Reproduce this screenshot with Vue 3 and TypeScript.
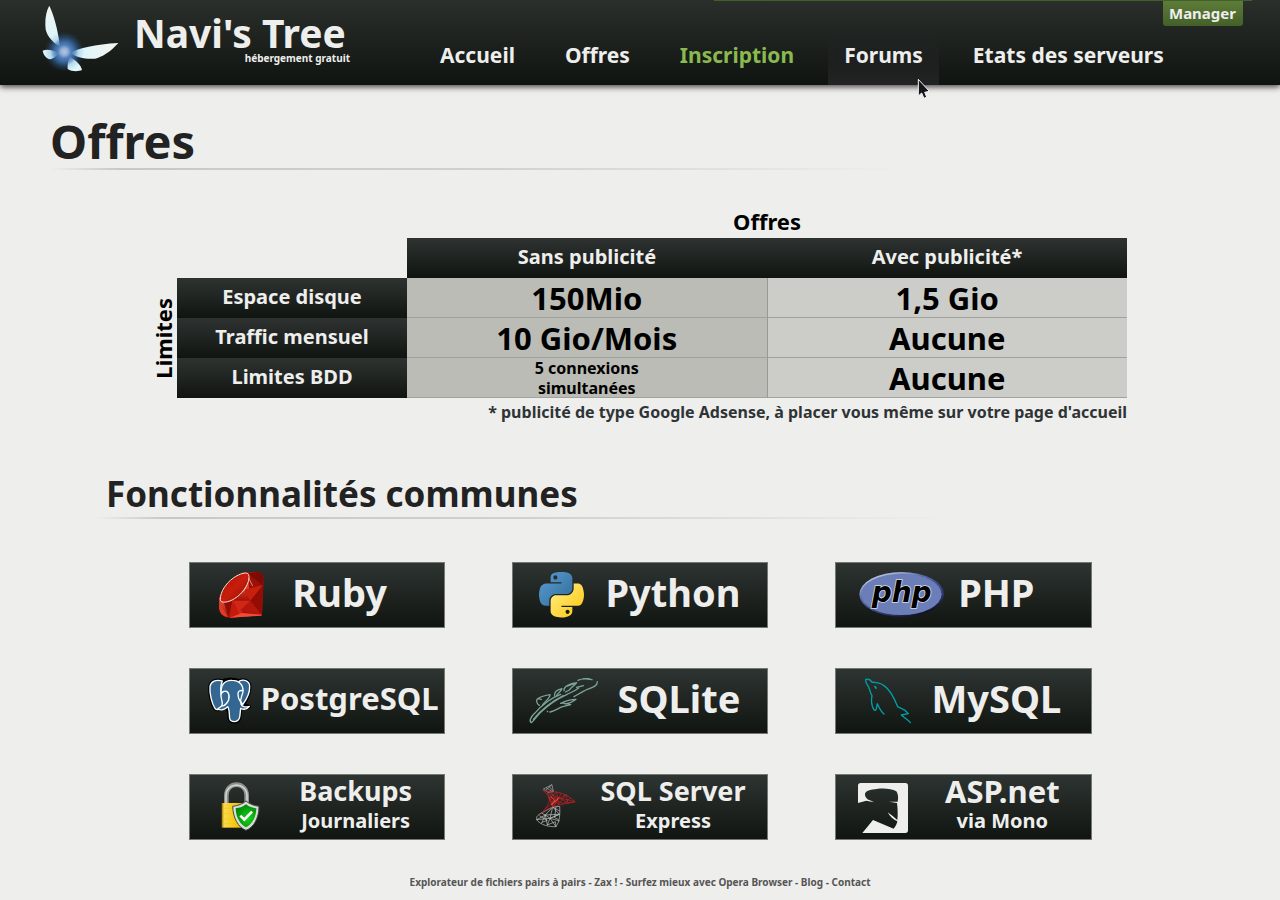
<script setup lang="ts">
interface NavItem {
  label: string
  href: string
  state?: 'accent' | 'hover'
}

interface Feature {
  id: string
  name: string
  detail?: string
  size: 'large' | 'medium' | 'small'
  column: 'tight' | 'normal' | 'roomy'
  viewBox: string
}

const nav: NavItem[] = [
  { label: 'Accueil', href: '#accueil' },
  { label: 'Offres', href: '#offres' },
  { label: 'Inscription', href: '#inscription', state: 'accent' },
  { label: 'Forums', href: '#forums', state: 'hover' },
  { label: 'Etats des serveurs', href: '#etats' },
]

const features: Feature[] = [
  { id: 'ruby', name: 'Ruby', size: 'large', column: 'tight', viewBox: '30 39 330 192' },
  { id: 'python', name: 'Python', size: 'large', column: 'normal', viewBox: '39 39 330 192' },
  { id: 'php', name: 'PHP', size: 'large', column: 'normal', viewBox: '18 39 330 192' },
  { id: 'postgresql', name: 'PostgreSQL', size: 'medium', column: 'normal', viewBox: '30 357 330 192' },
  { id: 'sqlite', name: 'SQLite', size: 'large', column: 'roomy', viewBox: '39 357 330 192' },
  { id: 'mysql', name: 'MySQL', size: 'large', column: 'normal', viewBox: '18 357 330 192' },
  { id: 'backups', name: 'Backups', detail: 'Journaliers', size: 'small', column: 'roomy', viewBox: '30 45 330 192' },
  { id: 'sqlserver', name: 'SQL Server', detail: 'Express', size: 'small', column: 'normal', viewBox: '39 45 330 192' },
  { id: 'aspnet', name: 'ASP.net', detail: 'via Mono', size: 'medium', column: 'roomy', viewBox: '18 45 330 192' },
]

const footerLinks: string[] = [
  'Explorateur de fichiers pairs à pairs',
  'Zax !',
  'Surfez mieux avec Opera Browser',
  'Blog',
  'Contact',
]
</script>

<template>
  <div class="page">
    <header class="top">
      <a class="brand" href="#accueil">
        <svg class="fairy" viewBox="120 12 240 207" aria-hidden="true">
          <defs>
            <radialGradient id="glow">
              <stop offset="0" stop-color="#b4c3dc" />
              <stop offset="0.25" stop-color="#95b0d8" />
              <stop offset="0.5" stop-color="#4678b4" stop-opacity="0.85" />
              <stop offset="1" stop-color="#1f4a80" stop-opacity="0" />
            </radialGradient>
            <radialGradient id="wing" gradientUnits="userSpaceOnUse" cx="193" cy="155" r="160">
              <stop offset="0.15" stop-color="#8fc0e4" />
              <stop offset="0.38" stop-color="#dff5fa" />
              <stop offset="1" stop-color="#f4f4f0" />
            </radialGradient>
          </defs>
          <circle cx="193" cy="155" r="60" fill="url(#glow)" />
          <g fill="url(#wing)">
            <path d="M148 17C160 42 173 84 180 140C162 131 141 110 137 88C134 60 138 34 148 17Z" />
            <path d="M355 129C332 155 305 172 285 176C255 178 228 172 212 158C235 145 285 133 355 129Z" />
            <path d="M128 152C140 146 160 150 177 160C166 171 157 178 150 178C139 175 130 165 128 152Z" />
            <path d="M209 170C227 180 243 195 246 210C235 215 215 215 203 207C202 195 204 181 209 170Z" />
          </g>
          <circle cx="193" cy="155" r="42" fill="url(#glow)" />
        </svg>
        <span class="brand-text">
          <span class="brand-name">Navi's Tree</span>
          <span class="brand-tag">hébergement gratuit</span>
        </span>
      </a>
      <nav class="menu">
        <a v-for="item in nav" :key="item.label" :href="item.href" :class="['menu-link', item.state]">
          {{ item.label }}
          <svg v-if="item.state === 'hover'" class="pointer" viewBox="347 234 42 66" aria-hidden="true">
            <path d="M351 238L351 288L361 279L368 295L376 291L370 277L384 274Z" fill="#16161a" stroke="#f4f4f4" stroke-width="3" stroke-linejoin="round" />
          </svg>
        </a>
      </nav>
      <div class="manager">
        <a class="manager-link" href="#manager">Manager</a>
      </div>
    </header>

    <main>
      <h1 class="title">Offres</h1>

      <section class="offers">
        <table class="grid">
          <colgroup>
            <col class="col-side" />
            <col class="col-head" />
            <col class="col-value" />
            <col class="col-value" />
          </colgroup>
          <thead>
            <tr class="group-row">
              <td colspan="2"></td>
              <th colspan="2" scope="colgroup" class="group">Offres</th>
            </tr>
            <tr>
              <td colspan="2"></td>
              <th scope="col" class="dark">Sans publicité</th>
              <th scope="col" class="dark">Avec publicité*</th>
            </tr>
          </thead>
          <tbody>
            <tr>
              <th rowspan="3" scope="rowgroup" class="side"><span>Limites</span></th>
              <th scope="row" class="dark">Espace disque</th>
              <td class="value free">150Mio</td>
              <td class="value ads">1,5 Gio</td>
            </tr>
            <tr>
              <th scope="row" class="dark">Traffic mensuel</th>
              <td class="value free">10 Gio/Mois</td>
              <td class="value ads">Aucune</td>
            </tr>
            <tr>
              <th scope="row" class="dark">Limites BDD</th>
              <td class="value free compact">5 connexions<br />simultanées</td>
              <td class="value ads">Aucune</td>
            </tr>
          </tbody>
        </table>
        <p class="note">* publicité de type Google Adsense, à placer vous même sur votre page d'accueil</p>
      </section>

      <h2 class="subtitle">Fonctionnalités communes</h2>

      <ul class="cards">
        <li v-for="f in features" :key="f.id" :class="['card', f.column]">
          <svg class="icon" :viewBox="f.viewBox" aria-hidden="true">
            <g v-if="f.id === 'ruby'">
              <defs>
                <linearGradient id="rb1" x1="0" y1="0" x2="1" y2="1">
                  <stop offset="0" stop-color="#a80d00" />
                  <stop offset="0.5" stop-color="#c81e0c" />
                  <stop offset="1" stop-color="#8e0b04" />
                </linearGradient>
                <linearGradient id="rb2" x1="0" y1="0" x2="0" y2="1">
                  <stop offset="0" stop-color="#f0583c" />
                  <stop offset="1" stop-color="#a30f06" />
                </linearGradient>
              </defs>
              <path d="M188 67L235 66Q250 67 251 84L246 196L150 203Q119 203 117 172L118 138Z" fill="#b01208" />
              <path d="M207 70L235 66Q250 67 251 84L249 110L205 92Z" fill="#7c0a05" />
              <path d="M210 75L249 107L192 118Z" fill="#9d1006" />
              <path d="M205 92L192 120L159 151L211 152Z" fill="url(#rb2)" />
              <path d="M192 120L249 105L211 152Z" fill="#c9200e" />
              <path d="M249 106L246 196L211 152Z" fill="#930c05" />
              <path d="M158 152L211 152L184 190L246 196L150 203Z" fill="#d42616" />
              <path d="M211 152L246 196L180 181Z" fill="#b3160b" />
              <path d="M118 142L132 160L159 151L148 202Q119 200 117 172Z" fill="url(#rb2)" />
              <path d="M132 159L158 152L146 202Z" fill="#8f0d06" />
              <path d="M118 160L145 202Q119 200 117 172Z" fill="#e23a26" />
              <path d="M148 203L185 189L246 194L244 197Z" fill="#f04c38" />
              <path d="M159 151L178 192L148 203Z" fill="#c41a0c" />
              <path d="M121 148C121 125 137 101 160 84C180 70 202 64 206 74C211 90 199 115 179 134C160 152 136 160 125 155Q121 153 121 148Z" fill="url(#rb1)" stroke="#f7ddd6" stroke-width="3" />
              <path d="M206 84L218 108M196 114L191 124" stroke="#f6c8bc" stroke-width="2" />
            </g>

            <g v-else-if="f.id === 'python'" transform="translate(117 66) scale(1.215)">
              <defs>
                <linearGradient id="pyb" x1="0" y1="0" x2="1" y2="1">
                  <stop offset="0" stop-color="#5a9fd4" />
                  <stop offset="1" stop-color="#306998" />
                </linearGradient>
                <linearGradient id="pyy" x1="0.2" y1="0.2" x2="0.9" y2="0.9">
                  <stop offset="0" stop-color="#ffe873" />
                  <stop offset="1" stop-color="#ffc816" />
                </linearGradient>
              </defs>
              <path fill="url(#pyb)" fill-rule="evenodd" d="M54.9 0C50.3 0 46 .4 42.1 1.1C30.8 3.1 28.7 7.3 28.7 15V25.3H55.5V28.7H18.6C10.8 28.7 4 33.3 1.9 42.3C-.6 52.5 -.7 58.8 1.9 69.5C3.8 77.4 8.3 83.1 16.1 83.1H25.4V70.8C25.4 62 33 54.2 42.1 54.2H68.9C76.3 54.2 82.3 48.1 82.3 40.6V15C82.3 7.8 76.2 2.3 68.9 1.1C64.3 .3 59.5 0 54.9 0ZM40.4 8.2C43.2 8.2 45.5 10.5 45.5 13.3C45.5 16.2 43.2 18.4 40.4 18.4C37.6 18.4 35.4 16.2 35.4 13.3C35.4 10.5 37.6 8.2 40.4 8.2Z" />
              <path fill="url(#pyy)" fill-rule="evenodd" d="M85.6 28.7V40.6C85.6 49.8 77.8 57.6 68.9 57.6H42.1C34.8 57.6 28.7 63.8 28.7 71.2V96.7C28.7 104 35 108.3 42.1 110.3C50.6 112.8 58.7 113.3 68.9 110.3C75.6 108.4 82.3 104.5 82.3 96.7V86.5H55.5V83.1H95.7C103.5 83.1 106.4 77.7 109.1 69.5C111.9 61.1 111.8 53 109.1 42.3C107.2 34.5 103.5 28.7 95.7 28.7ZM70.6 93.3C73.4 93.3 75.6 95.6 75.6 98.4C75.6 101.2 73.4 103.5 70.6 103.5C67.8 103.5 65.5 101.2 65.5 98.4C65.5 95.6 67.8 93.3 70.6 93.3Z" />
            </g>

            <g v-else-if="f.id === 'php'">
              <defs>
                <linearGradient id="phe" x1="0.1" y1="0" x2="0.8" y2="1">
                  <stop offset="0" stop-color="#e6e8f4" />
                  <stop offset="0.35" stop-color="#5c6db0" />
                  <stop offset="0.75" stop-color="#2c3670" />
                  <stop offset="1" stop-color="#05060c" />
                </linearGradient>
              </defs>
              <ellipse cx="215" cy="133" rx="127" ry="67" fill="url(#phe)" />
              <ellipse cx="214" cy="133" rx="121" ry="62" fill="#6c7eb7" />
              <text class="php-text" x="215" y="155" text-anchor="middle">php</text>
            </g>

            <g v-else-if="f.id === 'postgresql'" stroke-linecap="round" stroke-linejoin="round">
              <g fill="#336791" stroke="#000" stroke-width="11">
                <path d="M127 393C108 387 92 395 90 410C88 430 96 462 105 475C110 482 118 479 123 472L134 468L140 475C148 480 147 490 148 505C150 519 174 520 178 505C181 490 180 480 184 474L208 470L190 464C200 448 210 425 209 408C207 390 190 388 178 393C162 387 142 387 127 393Z" />
              </g>
              <g fill="#336791" stroke="#fff" stroke-width="4">
                <path d="M127 393C108 387 92 395 90 410C88 430 96 462 105 475C110 482 118 479 123 472L131 464C124 448 118 410 127 393Z" />
                <path d="M178 393C190 388 207 390 209 408C210 425 200 448 188 464L178 450Z" />
                <path d="M126 466C132 470 142 460 146 450C150 440 146 426 140 424C132 422 124 426 123 434C122 448 130 456 126 466Z" />
                <path d="M124 432C120 405 135 390 156 391C178 391 190 405 189 424C188 440 178 440 183 463C186 472 199 472 208 469C202 477 192 480 182 475C180 488 181 496 178 505C173 518 152 518 149 505C147 490 149 478 143 470C136 478 124 482 113 477L126 467C132 470 142 460 146 450C150 440 146 426 140 424C132 422 125 426 124 432Z" />
                <path fill="none" d="M189 422C180 420 174 424 174 431C174 442 180 455 188 462" />
              </g>
            </g>

            <g v-else-if="f.id === 'sqlite'" fill="none" stroke="#7ba496" stroke-width="4" stroke-linecap="round" stroke-linejoin="round">
              <path d="M94 518C86 514 93 500 104 490C125 466 150 445 182 433M94 518C104 510 110 499 122 487C140 470 160 452 200 434C210 428 222 425 236 414M100 508C125 478 152 456 190 437" />
              <path d="M118 466C108 460 108 448 114 446L124 448M112 447C120 440 138 436 150 434C152 440 142 448 128 464M164 438C162 428 168 420 186 416C182 424 176 428 170 436M192 422C190 412 208 400 230 398C224 406 214 412 208 420L196 426M202 408L230 398" />
              <path d="M234 391C246 384 260 386 276 389M250 386L268 386M292 395C292 408 278 412 262 418C248 424 236 432 222 440M230 412L250 407M150 486C166 482 176 474 188 470L212 464C198 460 190 458 182 460C198 452 216 448 228 448C218 456 214 460 196 462M142 484L143 485" />
            </g>

            <g v-else-if="f.id === 'mysql'" fill="none" stroke="#00a0a8" stroke-width="4" stroke-linecap="round" stroke-linejoin="round">
              <path d="M107 388C115 386 121 388 125 396C135 398 150 396 162 407C182 420 195 450 203 470C212 476 224 476 235 491L214 495C222 503 234 508 241 518M107 388C105 398 112 404 116 411C120 420 120 428 126 437C123 452 126 468 130 476C134 484 138 482 139 475L142 461C147 472 154 486 162 492" />
              <path d="M134 409C138 410 139 413 138 415Z" />
            </g>

            <g v-else-if="f.id === 'backups'">
              <defs>
                <linearGradient id="lkb">
                  <stop offset="0" stop-color="#8f6a00" />
                  <stop offset="0.08" stop-color="#fbd94c" />
                  <stop offset="0.5" stop-color="#f2c80c" />
                  <stop offset="1" stop-color="#b88600" />
                </linearGradient>
                <radialGradient id="lks" cx="0.6" cy="0.6" r="0.6">
                  <stop offset="0" stop-color="#18d41a" />
                  <stop offset="1" stop-color="#008a06" />
                </radialGradient>
              </defs>
              <path d="M139 130V104C139 60 200 60 200 104V130" fill="none" stroke="#8e908e" stroke-width="14" />
              <path d="M138 130V104C138 62 201 62 201 104V130" fill="none" stroke="#d0d2d0" stroke-width="5" />
              <path d="M125 126H212V200H125Z" fill="url(#lkb)" />
              <path d="M126 142H200M126 158H200M126 174H200M126 188H200" stroke="#e6bc08" stroke-width="1" />
              <path d="M198 120C208 129 222 134 237 136C237 170 222 199 198 208C174 199 159 170 158 136C174 134 188 129 198 120Z" fill="#d9dcd9" stroke="#444844" stroke-width="3" />
              <path d="M198 130C208 138 218 141 229 142C228 170 216 190 198 199C180 190 168 170 167 142C178 141 188 138 198 130Z" fill="url(#lks)" />
              <path d="M181 164L193 176L216 152" fill="none" stroke="#fff" stroke-width="8" />
            </g>

            <g v-else-if="f.id === 'sqlserver'" fill="none" stroke-linejoin="round">
              <g stroke="#a5aaac" stroke-width="2">
                <path d="M130 84L156 71L160 92L144 94ZM138 80L157 92M156 71L134 90M148 76L160 92" />
                <path d="M124 156C112 163 108 168 110 176C120 192 148 198 168 197C180 180 180 160 179 136L158 138L124 156ZM110 176L136 162L158 138L150 172L168 197M124 156L136 162L142 192L150 172L110 176M124 188L136 162L178 160L150 172L179 180M158 138L179 150M136 162L150 172L178 160L158 138M142 192L166 182L168 197M118 164L142 178L126 184M168 137L164 170L176 176" stroke="#c3c8c9" />
              </g>
              <path d="M128 87C145 92 155 92 170 93C192 97 212 108 225 122C205 127 180 130 160 137C145 143 132 150 124 157C140 138 150 126 147 112C143 100 136 94 128 87ZM147 112L170 93L176 130L198 101L204 126L225 122L176 110L147 112L176 130M142 96L160 137L184 97M147 112L160 137L176 110L204 126M150 128L176 110L142 96M136 144L168 118L190 128L212 111M154 94L168 118L198 101" stroke="#d31c22" stroke-width="2" />
              <path d="M150 104L164 118L154 132L176 112" stroke="#f0543c" stroke-width="3" />
            </g>

            <g v-else>
              <path d="M92 66H226Q234 66 234 74V208Q234 216 226 216H97L129 177L191 203C197 196 201 188 202 181C190 177 180 166 173 154L188 165L202 177C204 162 203 140 201 126L177 122L203 122C206 110 204 98 199 91C185 83 160 81 140 84C126 85 108 88 105 98C104 108 112 115 120 118L132 124L109 119L84 126V74Q84 66 92 66Z" fill="#eeeeec" />
            </g>
          </svg>
          <div class="label">
            <span :class="['name', f.size]">{{ f.name }}</span>
            <span v-if="f.detail" class="detail">{{ f.detail }}</span>
          </div>
        </li>
      </ul>
    </main>

    <footer class="foot">
      <template v-for="(text, i) in footerLinks" :key="text">
        <template v-if="i > 0"> - </template>
        <a href="#footer">{{ text }}</a>
      </template>
    </footer>
  </div>
</template>

<style>
body {
  background: #eeeeec;
}
</style>

<style scoped>
.page {
  font-family: "Noto Sans", "Open Sans", sans-serif;
  font-weight: 700;
  color: #222;
}

.page a {
  color: inherit;
  text-decoration: none;
}

.top {
  position: relative;
  display: flex;
  height: 85px;
  background: linear-gradient(#2a2f2c, #0f1410);
  box-shadow: 0 2px 6px #4a4244;
  color: #eeeeec;
}

.brand {
  display: flex;
  flex-shrink: 0;
  width: 350px;
  padding-left: 40px;
  box-sizing: border-box;
}

.fairy {
  flex-shrink: 0;
  width: 80px;
  height: 69px;
  margin-top: 4px;
}

.brand-text {
  display: flex;
  flex-direction: column;
  flex: 1;
  padding: 13px 0 0 14px;
}

.brand-name {
  font-size: 39px;
  line-height: 40px;
  white-space: nowrap;
}

.brand-tag {
  font-size: 10px;
  line-height: 10px;
  text-align: right;
}

.menu {
  display: flex;
  align-items: stretch;
  gap: 18px;
  padding: 24px 0 0 74px;
}

.menu-link {
  position: relative;
  padding: 15px 16px 0;
  font-size: 21px;
  line-height: 32px;
  white-space: nowrap;
}

.page .accent {
  color: #8ab950;
}

.hover {
  background: linear-gradient(rgba(36, 36, 38, 0), #222324);
}

.pointer {
  position: absolute;
  left: 89px;
  top: 54px;
  width: 14px;
  height: 22px;
  z-index: 1;
}

.manager {
  position: absolute;
  top: 0;
  right: 28px;
  width: 42%;
  border-top: 1px solid #44602a;
  display: flex;
  justify-content: flex-end;
  padding-right: 9px;
  box-sizing: border-box;
}

.manager-link {
  padding: 0 7px 0 6px;
  height: 25px;
  font-size: 15px;
  line-height: 24px;
  background: linear-gradient(#5d7c38, #44602a);
  border-radius: 0 0 3px 3px;
}

.title,
.subtitle {
  margin: 0;
  padding-bottom: 1px;
  background: linear-gradient(90deg, transparent, #c8c8c6 8%, #d0d0ce 50%, transparent) left bottom / 855px 2px no-repeat;
}

.title {
  margin: 28px 0 0 50px;
  font-size: 47px;
  line-height: 56px;
}

.subtitle {
  margin: 46px 0 0 95px;
  padding-left: 11px;
  font-size: 35px;
  line-height: 49px;
}

.offers {
  max-width: 974px;
  margin: 36px auto 0;
}

.grid {
  width: 100%;
  border-collapse: collapse;
  table-layout: fixed;
}

.grid th,
.grid td {
  padding: 0;
  text-align: center;
}

.col-side {
  width: 24px;
}

.col-head {
  width: 230px;
}

.group-row {
  height: 32px;
}

.grid .group {
  padding-bottom: 2px;
  font-size: 22px;
  line-height: 30px;
  color: #000;
}

.grid .dark {
  height: 40px;
  padding-bottom: 3px;
  box-sizing: border-box;
  background: linear-gradient(#2e3331, #101411);
  color: #eeeeec;
  font-size: 20px;
  line-height: 24px;
}

.side span {
  display: block;
  writing-mode: vertical-rl;
  transform: rotate(180deg);
  color: #000;
  font-size: 22px;
  line-height: 20px;
  width: 20px;
}

.value {
  color: #000;
  font-size: 31px;
  line-height: 38px;
  box-shadow: inset 0 -1px #a0a29d;
}

.free {
  background: #babcb5;
  border-right: 1px solid #989a95;
}

.ads {
  background: #cccdc9;
}

.grid .compact {
  font-size: 16px;
  line-height: 20px;
}

.note {
  margin: 3px 0 0;
  color: #2e3436;
  font-size: 16px;
  line-height: 22px;
  text-align: right;
}

.cards {
  list-style: none;
  max-width: 903px;
  margin: 43px auto 0;
  padding: 0;
  display: grid;
  grid-template-columns: repeat(3, 1fr);
  gap: 40px 67px;
}

.card {
  display: grid;
  grid-template-columns: 66px 1fr;
  align-items: center;
  height: 66px;
  box-sizing: border-box;
  border: 1px solid #747873;
  background: linear-gradient(#2e3432, #101511);
  color: #eeeeec;
}

.tight {
  grid-template-columns: 46px 1fr;
}

.roomy {
  grid-template-columns: 78px 1fr;
}

.icon {
  width: 110px;
  height: 64px;
}

.php-text {
  font: italic 700 84px "DejaVu Sans", sans-serif;
  fill: #000;
  stroke: #d8dae4;
  stroke-width: 5px;
  paint-order: stroke;
}

.label {
  display: flex;
  flex-direction: column;
  align-items: center;
  padding-bottom: 6px;
  white-space: nowrap;
}

.large {
  font-size: 38px;
  line-height: 48px;
}

.medium {
  font-size: 31px;
  line-height: 32px;
}

.small {
  font-size: 27px;
  line-height: 32px;
}

.detail {
  font-size: 20px;
  line-height: 28px;
}

.foot {
  margin-top: 34px;
  padding-bottom: 10px;
  color: #555;
  font-size: 10px;
  line-height: 16px;
  text-align: center;
}
</style>
